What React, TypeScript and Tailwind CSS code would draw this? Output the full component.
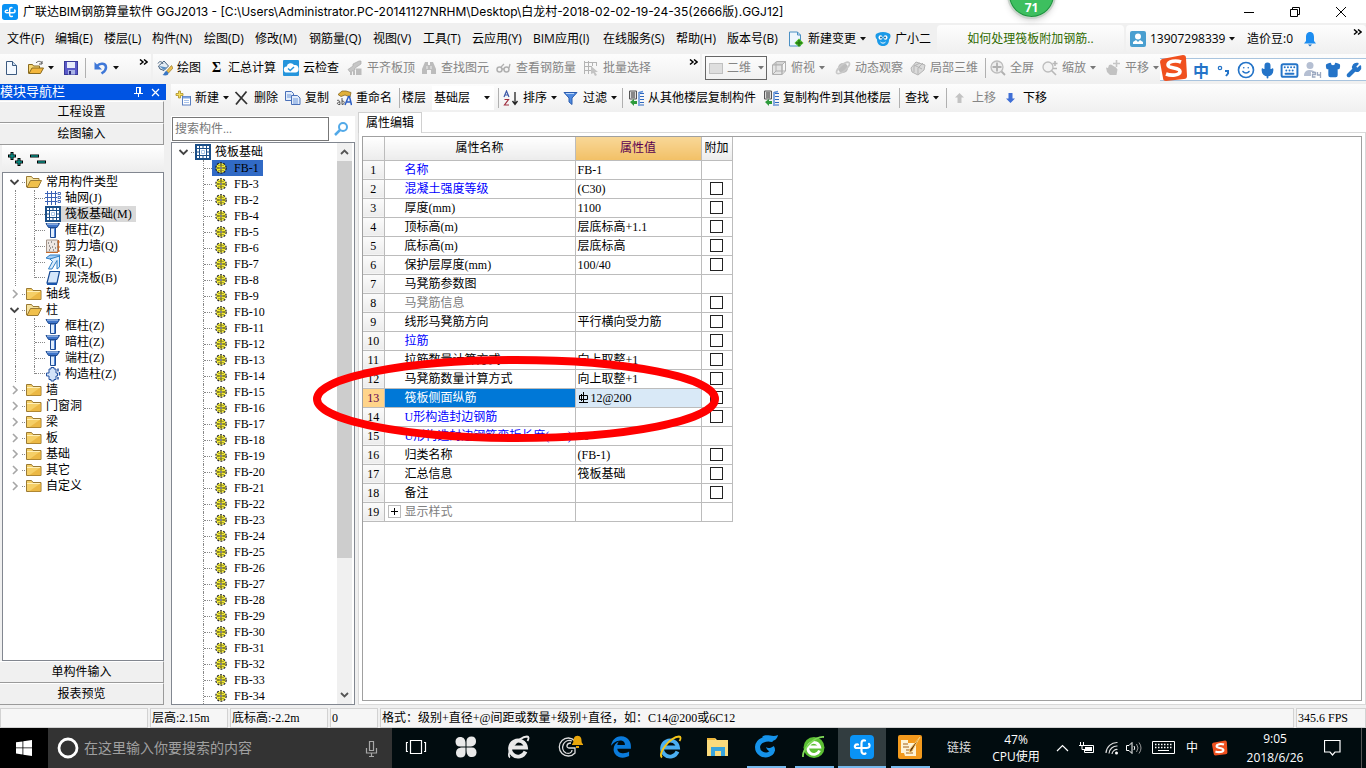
import { ReactNode, useState } from 'react';
import { Keyboard, Mic, Shirt, Smile, Wrench } from 'lucide-react';
import { FaEdgeLegacy } from 'react-icons/fa';

const uiFont = "font-['Open_Sans','Noto_Sans_CJK_SC',sans-serif]";
const songFont = "font-['Liberation_Serif','Noto_Sans_CJK_SC',serif]";
const band = 'bg-gradient-to-b from-[#fdfdfd] to-[#f0f0f0]';

/* ---------- icons ---------- */

function Svg({ children, w = 16, h = 16, box }: { children: ReactNode; w?: number; h?: number; box?: string }) {
  return (
    <svg width={w} height={h} viewBox={box ?? `0 0 ${w} ${h}`} fill="none" className="shrink-0" aria-hidden="true">
      {children}
    </svg>
  );
}

const Caret = ({ color = '#111' }: { color?: string }) => (
  <Svg w={6} h={4}>
    <path d="M0 0h6L3 3.5z" fill={color} />
  </Svg>
);

const More = () => (
  <Svg w={9} h={7}>
    <path d="M1 .5l3 2.5-3 2.5M5 .5l3 2.5-3 2.5" stroke="#000" strokeWidth="1.5" />
  </Svg>
);

const AppIcon = ({ size = 16 }: { size?: number }) => (
  <Svg w={size} h={size} box="0 0 24 24">
    <rect width="24" height="24" rx="4" fill="#0a93f5" />
    <path d="M15 5.500c-2.500-.5-3.500.5-3.500 3V16c0 2.500 2 3.500 4 2.500M8 9.500c-3.500-.5-4.500 3.500-1 3.500h9.500c3 0 4-2 2.500-4" stroke="#fff" strokeWidth="2.200" strokeLinecap="round" />
  </Svg>
);

const NewDocIcon = () => (
  <Svg>
    <path d="M2.500 1.500h6l4 4v9h-10z" fill="#f4f9ff" stroke="#3c5a80" />
    <path d="M8.500 1.500v4h4" fill="#c9dcf0" stroke="#3c5a80" />
  </Svg>
);

const OpenIcon = () => (
  <Svg>
    <path d="M.5 13.500v-9h4l1 1.500h6v2.500" fill="#f7d774" stroke="#8a6a1e" />
    <path d="M1 13.500L4 8h11.500l-3 5.500z" fill="#f3b63c" stroke="#8a6a1e" />
    <path d="M8 3c2-2.500 5-2 6 .5m0-2.500v3h-3" stroke="#555" />
  </Svg>
);

const SaveIcon = () => (
  <Svg>
    <rect x="1.500" y="1.500" width="13" height="13" fill="#5a5ac8" stroke="#3a3a98" />
    <rect x="4" y="2" width="8" height="6" fill="#e8ecfa" />
    <rect x="5" y="10" width="7" height="4.500" fill="#aab4e6" />
    <rect x="6" y="11" width="2" height="3.500" fill="#2c2c80" />
  </Svg>
);

const UndoIcon = () => (
  <Svg>
    <path d="M4 6C7 2.500 13 3 13 7.500c0 3.500-2.500 4.500-4.500 6" stroke="#3f78d8" strokeWidth="2.500" />
    <path d="M1.500 2v7.500h7.500z" fill="#3f78d8" />
  </Svg>
);

const PaintIcon = () => (
  <Svg>
    <path d="M1.500 6L7 1l4.500 5L7 10.500 3 9z" fill="#e4edf5" stroke="#46607c" />
    <path d="M1 3.500C2 1 5 1 6 4" stroke="#46607c" />
    <path d="M2 6l8 1.500L7 10z" fill="#5a8fc4" />
    <path d="M14.500 5.500L9.500 11l2 2L16 8z" fill="#eec04c" stroke="#8c6a1a" strokeWidth=".6" />
    <path d="M9.500 11c-2 0-2 3-4 4 3 1 6 .5 6-2z" fill="#3976c4" />
  </Svg>
);

const CloudCheckIcon = () => (
  <Svg>
    <rect width="16" height="16" rx="1" fill="#2595dc" />
    <path d="M4 12.500a3 3 0 01-.3-6A4 4 0 0111 5a3.700 3.700 0 011.500 7.500z" fill="#fff" />
    <path d="M5 8.500l2.200 2L11 7" stroke="#2595dc" strokeWidth="1.500" />
  </Svg>
);

const AlignTopIcon = () => (
  <Svg>
    <path d="M1 9.500L6 6V4l6-3h2v3L8 8v2l-5 2z" fill="#c6c6c6" stroke="#aaa" strokeWidth=".7" />
    <path d="M3 11.500h2V15H3zM6 10.500h2V15H6zM9 8.500h5.500V15H9z" fill="#bcbcbc" />
  </Svg>
);

const BinocularsIcon = () => (
  <Svg>
    <path d="M4 2h3v3h2V2h3l3 7v5h-5v-4H6v4H1V9z" fill="#bcbcbc" />
    <path d="M6 6v3M10 6v3" stroke="#eee" />
  </Svg>
);

const GlassesIcon = () => (
  <Svg>
    <circle cx="3.500" cy="9.500" r="2.500" stroke="#b0b0b0" strokeWidth="1.500" />
    <circle cx="10.500" cy="9.500" r="2.500" stroke="#b0b0b0" strokeWidth="1.500" />
    <path d="M6 9h2M5 7l3-3M13 8l1-4" stroke="#b0b0b0" strokeWidth="1.300" />
  </Svg>
);

const BatchIcon = () => (
  <Svg>
    <path d="M1.500 1v13M5.500 1v13M1 2.500h13M1 6.500h8M1 10.500h7M9.500 2v4M13.500 2v4" stroke="#b4b4b4" />
    <path d="M8 6l7 6h-3l2 3-2 1-1.500-3L8 14z" fill="#c4c4c4" />
  </Svg>
);

const PlaneIcon = () => (
  <Svg>
    <rect x="1.500" y="3.500" width="13" height="10" fill="#dedede" stroke="#c0c0c0" />
  </Svg>
);

const CubeIcon = () => (
  <Svg>
    <path d="M1.500 5l4-3.500h9L11 5z" fill="#d6d6d6" stroke="#b0b0b0" />
    <path d="M1.500 5H11v9.500H1.500z" fill="#e4e4e4" stroke="#b0b0b0" />
    <path d="M11 5l3.500-3.500V11L11 14.500zM5 2v9l-3 3m3-3h9" stroke="#b0b0b0" />
  </Svg>
);

const OrbitIcon = () => (
  <Svg>
    <circle cx="8" cy="8" r="5" fill="#bdbdbd" />
    <ellipse cx="8" cy="8" rx="8" ry="3" transform="rotate(-40 8 8)" stroke="#c9c9c9" strokeWidth="1.600" />
  </Svg>
);

const Local3dIcon = () => (
  <Svg>
    <path d="M1 8l5-6 9 3-1 5-6 5-6-3z" fill="#dadada" stroke="#b3b3b3" />
    <path d="M4 5l8 4M8 14V8l5-5M4 12V6l6-3" stroke="#b3b3b3" />
  </Svg>
);

const FullIcon = () => (
  <Svg>
    <circle cx="7" cy="7" r="6" stroke="#bdbdbd" strokeWidth="1.300" fill="#eee" />
    <path d="M7 2.500v9M2.500 7h9M11.500 11.500L15 15" stroke="#b0b0b0" strokeWidth="1.800" />
  </Svg>
);

const ZoomIcon = () => (
  <Svg>
    <circle cx="6" cy="7" r="5" stroke="#bdbdbd" strokeWidth="1.300" fill="#f3f3f3" />
    <path d="M9.500 10.500L14 15M13 1v5M10.500 3.500h5M11 8.500h4" stroke="#b8b8b8" strokeWidth="1.600" />
  </Svg>
);

const PanIcon = () => (
  <Svg>
    <path d="M1 7.500l2 .5 1-3 2-.5 5 3 1.500 2-1 5.500H5L2 12z" fill="#c2c2c2" />
    <path d="M11.500 0v7M8 3.500h7" stroke="#c6c6c6" strokeWidth="1.600" />
  </Svg>
);

const AddIcon = () => (
  <Svg>
    <rect x="7.500" y="6.500" width="8" height="8.500" fill="#fff" stroke="#5a7fc0" />
    <path d="M8 7.500h7" stroke="#7ba3e0" strokeWidth="2" />
    <path d="M9 10.500h5M9 12.500h5" stroke="#a9c3ea" />
    <path d="M3.500 1h2v2.500H8v2H5.500V8h-2V5.500H1v-2h2.500z" fill="#f8df5c" stroke="#a08318" strokeWidth=".7" />
  </Svg>
);

const DeleteIcon = () => (
  <Svg>
    <path d="M1.500 2L13 14M12.500 1.500L2 14.500" stroke="#333" strokeWidth="1.800" />
  </Svg>
);

const CopyIcon = () => (
  <Svg>
    <path d="M.5 1.500h6l2 2v7h-8z" fill="#e3edfb" stroke="#4a70b8" />
    <path d="M6.500 5.500h6l2.500 2.500v6.500H6.500z" fill="#e3edfb" stroke="#4a70b8" />
    <path d="M2 5h4M2 7h4M8 9h5M8 11h5M8 13h5" stroke="#6f98da" />
  </Svg>
);

const RenameIcon = () => (
  <Svg>
    <path d="M2 4.500L6 1h4l5 1.500-1 4.500-5-2-4 1.500z" fill="#e0b03a" stroke="#7a5a14" strokeWidth=".7" />
    <path d="M9 15l3.500-8.500h1L15.500 15M10.500 12h4" stroke="#2d5fc4" strokeWidth="1.500" />
    <path d="M1 10.500c2.500-1 3 1 3 4-3 .5-4-2.500 0-2.500M6 8v6.500c3 0 3-4 0-3.500" stroke="#444" strokeWidth=".9" />
  </Svg>
);

const SortIcon = () => (
  <Svg>
    <path d="M1 7l2.500-6L6 7M2 5h3" stroke="#3d59a8" strokeWidth="1.200" />
    <path d="M1.500 9.500h4L1.500 15h4.500" stroke="#a03040" strokeWidth="1.200" />
    <path d="M12 2v12M9.500 11l2.500 3.500 2.500-3.500" stroke="#222" strokeWidth="1.300" />
  </Svg>
);

const FilterIcon = () => (
  <Svg>
    <path d="M1 2.500h13L9 8v6.500L6 12V8z" fill="#4f8ae0" stroke="#2b5cae" />
    <path d="M3 3.500h8" stroke="#b8d4f8" />
  </Svg>
);

const CopyFloorIcon = () => (
  <Svg>
    <path d="M1.500 1h7v8h-7z" fill="#ddd" stroke="#555" />
    <path d="M3 3h4M3 5h4M3 7h4" stroke="#333" />
    <path d="M12 3.500h4M12 6.500h4M12 9.500h4M12 12.500h4M12 15h4" stroke="#2e68c0" />
    <path d="M11 2v14M11 2.500l4-1" stroke="#5c8fd8" strokeWidth="1.500" />
    <path d="M2 12l4-3v2h3v3H6v2z" fill="#2e9b3c" />
  </Svg>
);

const ArrowIcon = ({ up }: { up?: boolean }) => (
  <Svg w={14} h={10}>
    {up ? (
      <path d="M5.500 0L10 4.500H7.500V10h-4V4.500H1z" fill="#c3c3c3" />
    ) : (
      <path d="M5.500 10L10 5.500H7.500V0h-4v5.500H1z" fill="#3f6fd6" />
    )}
  </Svg>
);

const ChangeIcon = () => (
  <Svg>
    <path d="M1.500 1h8l3 3v11h-11z" fill="#eef6fd" stroke="#4b90c4" />
    <path d="M9.500 1v3h3" stroke="#4b90c4" />
    <path d="M11 7.500l4.500 4.500-4.500 4-4.500-4z" fill="#46b525" />
    <path d="M11 9v6M8 12h6" stroke="#267a10" strokeWidth="1.500" />
  </Svg>
);

const MascotIcon = () => (
  <Svg>
    <path d="M1 3l2-1c3-1.500 7-1.500 10 0l2 1c1 2 .5 4-1 5.500 0 4-2 6.500-6 6.500s-6-2.500-6-6.500C.5 7 0 5 1 3z" fill="#1b9ae8" />
    <ellipse cx="5.500" cy="6.500" rx="2" ry="2.200" fill="#fff" />
    <ellipse cx="10.500" cy="6.500" rx="2" ry="2.200" fill="#fff" />
    <circle cx="6" cy="6.500" r="1" fill="#12639c" />
    <circle cx="10" cy="6.500" r="1" fill="#12639c" />
    <path d="M5.500 11c1.500 1.500 3.500 1.500 5 0" stroke="#fff" />
  </Svg>
);

const UserIcon = () => (
  <Svg>
    <rect width="16" height="16" rx="2" fill="#4a9fd0" />
    <circle cx="8" cy="5.500" r="3" fill="#fff" />
    <path d="M3 13v-2l3-2 2 2 2-2 3 2v2z" fill="#fff" />
  </Svg>
);

const BellIcon = () => (
  <Svg w={14}>
    <path d="M7 1c3 0 4 2.500 4 5v4l2 2.500H1L3 10V6c0-2.500 1-5 4-5z" fill="#1d8df0" />
    <path d="M5 13.500h4L7 15.500z" fill="#1d6fc0" />
  </Svg>
);

const SogouIcon = ({ size }: { size: number }) => (
  <Svg w={size} h={size} box="0 0 28 28">
    <path d="M2 5L23 1q3 0 3 3l1 18q0 3-3 3L6 27q-3 0-3-3L0 8q0-2 2-3z" fill="#f0501e" />
    <path d="M21 8C16 6 8 7 8 11c0 4 12 2 12 6.500C20 21.500 11 22 6 20" stroke="#fff" strokeWidth="3.600" />
  </Svg>
);

const FolderIcon = ({ open }: { open?: boolean }) => (
  <Svg>
    {open ? (
      <>
        <path d="M.5 13V2.500h5l1.500 2h6V7" fill="#f6e3a0" stroke="#9a7a34" />
        <path d="M1 13.500L4.500 6.500h11L12 13.500z" fill="#f0c04c" stroke="#9a7a34" />
      </>
    ) : (
      <>
        <path d="M.5 13.500V2.500h5l1.500 2h8v9z" fill="#f5cf67" stroke="#9a7a34" />
        <path d="M1 5.500h13" stroke="#fff0b8" />
        <path d="M15 5v8.500H3z" fill="#e4a92e" opacity=".6" />
      </>
    )}
  </Svg>
);

const GridIcon = () => (
  <Svg>
    <path d="M2.500 1v14M6.500 1v14M10.500 1v14M0 3.500h12M0 7.500h12M0 11.500h12" stroke="#3a62b5" />
    <path d="M13 2.500h2.500v2H13zM13 6.500h2.500v2H13zM13 10.500h2.500v2H13z" stroke="#3a62b5" strokeWidth=".9" />
  </Svg>
);

const RaftIcon = () => (
  <Svg>
    <path d="M1 1h14v14H1z" fill="#fff" stroke="#1b4f88" strokeWidth="2" />
    <path d="M4.500 2v12M11.500 2v12M2 4.500h12M2 11.500h12" stroke="#1b4f88" />
    <path d="M8 2v2M8 12v2M2 8h2M12 8h2" stroke="#1b4f88" />
    <path d="M6.500 6.500h3v3h-3z" fill="#fff" stroke="#a9c6e6" />
  </Svg>
);

const ColumnIcon = () => (
  <Svg>
    <path d="M1 1.500h13.500L12 5.500H3.500z" fill="#3e74c9" stroke="#1c4a91" />
    <path d="M2 2h11" stroke="#c6dcfa" />
    <path d="M5.500 6h5v9.500h-5z" fill="#e2eefc" stroke="#1c4a91" />
    <path d="M9.500 6v9" stroke="#4b82d8" />
  </Svg>
);

const WallIcon = () => (
  <Svg>
    <path d="M1.500 2h11v12h-11z" fill="#eee7e2" stroke="#a39488" />
    <path d="M3 5h1M6 4h1M9 6h1M4 8h1M7 9h1M10 10h1M4 12h1M8 12h1M5 10h1" stroke="#444" />
    <path d="M13.500 2v12M12 4h3M12 9h3M12 13h3M1 14.500h12" stroke="#c46a2c" />
  </Svg>
);

const BeamIcon = () => (
  <Svg>
    <path d="M1 4l4-3h10l-3 4H5z" fill="#a5cdf3" stroke="#2f7fc5" />
    <path d="M5 5l2.500 2.500L3.500 15H7l5-8.500V15l2.500-2V2z" fill="#d9ebfb" stroke="#2f7fc5" />
  </Svg>
);

const SlabIcon = () => (
  <Svg>
    <path d="M5 1.500h9.500L12 13H2z" fill="#d5e6fb" stroke="#174a94" strokeWidth="1.200" />
    <path d="M2 13h10v2H2z" fill="#1b56ae" />
  </Svg>
);

const TieColumnIcon = () => (
  <Svg>
    <path d="M4 3h2V1.500h3V3h2v4h1.500v3H11v3.500H9V15H6v-1.500H4V10H1.500V7H4z" fill="#d2e2f8" stroke="#2452a0" />
    <path d="M13 2.500v3M14.500 6v3.500M13 11v2.500" stroke="#2452a0" strokeWidth="1.500" />
  </Svg>
);

const GearIcon = () => (
  <Svg w={12} h={12}>
    <circle cx="6" cy="6" r="4.800" fill="#f6ee2a" />
    <circle cx="6" cy="6" r="5.200" stroke="#222" strokeWidth="1.200" strokeDasharray="2 1.267" />
    <path d="M6 2v2M6 8v2M2 6h2M8 6h2" stroke="#222" />
    <path d="M3.500 3.500h1M7.500 3.500h1M3.500 8.500h1M7.500 8.500h1" stroke="#555" />
    <circle cx="6" cy="6" r="1.200" fill="#fff" stroke="#222" strokeWidth=".8" />
  </Svg>
);

const Chevron = ({ open }: { open?: boolean }) => (
  <Svg w={12} h={12}>
    {open ? (
      <path d="M1.500 4l4 4 4-4" stroke="#444" strokeWidth="1.800" />
    ) : (
      <path d="M4 2l4 4-4 4" stroke="#a6a6a6" strokeWidth="1.600" />
    )}
  </Svg>
);

/* ---------- toolbars ---------- */

type Tool = { w: string; icon?: ReactNode; label?: string; caret?: boolean; off?: boolean };

function ToolButton({ w, icon, label, caret, off }: Tool) {
  return (
    <button
      aria-label={label ?? '工具'}
      className={`${w} flex h-full shrink-0 items-center gap-1 whitespace-nowrap text-xs ${off ? 'text-[#858585]' : 'text-black'}`}
    >
      {icon}
      {label && <span>{label}</span>}
      {caret && <Caret color={off ? '#777' : '#111'} />}
    </button>
  );
}

const Sep = ({ w }: { w: string }) => (
  <span className={`${w} flex h-full shrink-0 items-center`}>
    <span className="h-5 w-px bg-[#b0b0b0]" />
  </span>
);

const menus = [
  { w: 'w-12', label: '文件(F)' },
  { w: 'w-[49px]', label: '编辑(E)' },
  { w: 'w-12', label: '楼层(L)' },
  { w: 'w-[52px]', label: '构件(N)' },
  { w: 'w-[51px]', label: '绘图(D)' },
  { w: 'w-[54px]', label: '修改(M)' },
  { w: 'w-16', label: '钢筋量(Q)' },
  { w: 'w-[50px]', label: '视图(V)' },
  { w: 'w-[49px]', label: '工具(T)' },
  { w: 'w-[61px]', label: '云应用(Y)' },
  { w: 'w-[70px]', label: 'BIM应用(I)' },
  { w: 'w-[73px]', label: '在线服务(S)' },
  { w: 'w-[51px]', label: '帮助(H)' },
  { w: 'w-[60px]', label: '版本号(B)' },
];

const drawTools: Tool[] = [
  { w: 'w-[52px]', icon: <PaintIcon />, label: '绘图' },
  { w: 'w-[74px]', icon: <b className="w-[15px] text-center font-['Liberation_Serif',serif] text-sm leading-4">Σ</b>, label: '汇总计算' },
  { w: 'w-16', icon: <CloudCheckIcon />, label: '云检查' },
  { w: 'w-[74px]', icon: <AlignTopIcon />, label: '平齐板顶', off: true },
  { w: 'w-[75px]', icon: <BinocularsIcon />, label: '查找图元', off: true },
  { w: 'w-[87px]', icon: <GlassesIcon />, label: '查看钢筋量', off: true },
  { w: 'w-[110px]', icon: <BatchIcon />, label: '批量选择', off: true },
];

const viewTools: Tool[] = [
  { w: 'w-16', icon: <CubeIcon />, label: '俯视', caret: true, off: true },
  { w: 'w-[75px]', icon: <OrbitIcon />, label: '动态观察', off: true },
  { w: 'w-[75px]', icon: <Local3dIcon />, label: '局部三维', off: true },
];

const zoomTools: Tool[] = [
  { w: 'w-[52px]', icon: <FullIcon />, label: '全屏', off: true },
  { w: 'w-[63px]', icon: <ZoomIcon />, label: '缩放', caret: true, off: true },
  { w: 'w-[63px]', icon: <PanIcon />, label: '平移', caret: true, off: true },
];

function TitleBar() {
  return (
    <header className="flex h-[23px] items-center bg-white pl-[2px]">
      <AppIcon />
      <h1 className="ml-[5px] flex-1 whitespace-nowrap font-['Inter','Noto_Sans_CJK_SC',sans-serif] text-xs">
        广联达BIM钢筋算量软件 GGJ2013 - [C:\Users\Administrator.PC-20141127NRHM\Desktop\白龙村-2018-02-02-19-24-35(2666版).GGJ12]
      </h1>
      <div className="flex gap-9 pr-5">
        <button aria-label="最小化">
          <Svg w={10} h={10}><path d="M0 5.500h10" stroke="#000" /></Svg>
        </button>
        <button aria-label="还原">
          <Svg w={10} h={10}><path d="M.5 2.500h7v7h-7zM2.500 2.500v-2h7v7h-2" stroke="#000" /></Svg>
        </button>
        <button aria-label="关闭">
          <Svg w={10} h={10}><path d="M0 0l10 10M10 0L0 10" stroke="#000" /></Svg>
        </button>
      </div>
    </header>
  );
}

function MenuBar() {
  return (
    <nav className="flex h-[31px] items-center overflow-hidden pl-[7px] text-xs">
      {menus.map((m) => (
        <button key={m.label} className={`${m.w} shrink-0 whitespace-nowrap text-left`}>
          {m.label}
        </button>
      ))}
      <ToolButton w="w-[87px] ml-px" icon={<ChangeIcon />} label="新建变更" caret />
      <ToolButton w="w-[62px]" icon={<MascotIcon />} label="广小二" />
      <a href="#help" className={`${band} flex h-7 w-[187px] shrink-0 items-center justify-center rounded-sm text-[#2f6a00]`}>
        如何处理筏板附加钢筋..
      </a>
      <div className={`${band} ml-[2px] flex h-7 min-w-0 flex-1 items-center rounded-sm pl-1`}>
        <ToolButton w="w-[117px]" icon={<UserIcon />} label="13907298339" caret />
        <span className="w-[56px] shrink-0 whitespace-nowrap">造价豆:0</span>
        <button aria-label="消息"><BellIcon /></button>
        <span className="mb-3 ml-auto pr-1"><More /></span>
      </div>
    </nav>
  );
}

function MainToolbar() {
  return (
    <div className="relative flex h-[28px] gap-[2px] overflow-hidden">
      <div className={`${band} flex w-[151px] shrink-0 items-center pl-1`}>
        <ToolButton w="w-6" icon={<NewDocIcon />} />
        <ToolButton w="w-[35px]" icon={<OpenIcon />} caret />
        <ToolButton w="w-[22px]" icon={<SaveIcon />} />
        <Sep w="w-2" />
        <ToolButton w="w-[46px]" icon={<UndoIcon />} caret />
        <span className="mb-3"><More /></span>
      </div>
      <div className={`${band} flex w-[547px] shrink-0 items-center pl-1`}>
        {drawTools.map((t) => <ToolButton key={t.label} {...t} />)}
        <span className="mb-3 -ml-1"><More /></span>
      </div>
      <div className={`${band} flex flex-1 items-center pl-[3px]`}>
        <button className="mr-1 flex h-6 w-[62px] shrink-0 items-center gap-[3px] border border-[#666] pl-[2px] text-xs text-[#858585]">
          <PlaneIcon />
          <span className="mr-1 whitespace-nowrap">二维</span>
          <Caret color="#777" />
        </button>
        {viewTools.map((t) => <ToolButton key={t.label} {...t} />)}
        <Sep w="w-[5px]" />
        {zoomTools.map((t) => <ToolButton key={t.label} {...t} />)}
      </div>
      {/* input method bar floats over the toolbar */}
      <div className="absolute right-0 top-0 flex h-7 w-[206px] items-center">
        <span className="absolute inset-x-0 bottom-[1px] top-1 border-y border-[#a9c4de] bg-white" />
        <div className="relative flex items-center text-[#2474c8]">
          <SogouIcon size={28} />
          <b className="ml-[5px] mt-1 w-6 font-['Noto_Sans_CJK_SC',sans-serif] text-base leading-5">中</b>
          <span className="mt-1 w-5">
            <Svg w={14} h={14}>
              <circle cx="3" cy="5" r="1.700" stroke="#2474c8" strokeWidth="1.200" />
              <path d="M8 8h3v2.500L9 13" stroke="#2474c8" strokeWidth="2" />
            </Svg>
          </span>
          <Smile size={18} strokeWidth={2.200} className="mt-1" />
          <Mic size={17} strokeWidth={2.500} className="ml-1 mt-1" fill="currentColor" />
          <Keyboard size={19} strokeWidth={2.500} className="ml-1 mt-1" />
          <span className="ml-1 mt-1 w-[22px]">
            <Svg w={19} h={18}>
              <circle cx="7" cy="4.500" r="3.500" fill="#b5bfd2" />
              <path d="M1 15c0-5 3-6 6-6s4 1 5 2H8v4z" fill="#b5bfd2" />
              <path d="M9 11.500h3.500v2H9.500v2.500h3M14.500 11v3H18M17.500 11v6" stroke="#9ba8c0" strokeWidth="1.300" />
            </Svg>
          </span>
          <Shirt size={16} fill="currentColor" className="mt-1" />
          <Wrench size={16} fill="currentColor" className="ml-[5px] mt-1" />
        </div>
      </div>
    </div>
  );
}

function ComponentToolbar() {
  return (
    <div className={`${band} flex h-[28px] items-center overflow-hidden pl-1 text-xs`}>
      <ToolButton w="w-[59px]" icon={<AddIcon />} label="新建" caret />
      <ToolButton w="w-[51px]" icon={<DeleteIcon />} label="删除" />
      <ToolButton w="w-[51px]" icon={<CopyIcon />} label="复制" />
      <ToolButton w="w-[63px]" icon={<RenameIcon />} label="重命名" />
      <Sep w="w-[3px]" />
      <label htmlFor="floor" className="w-[30px] shrink-0 whitespace-nowrap">楼层</label>
      <div className="flex h-6 w-[62px] shrink-0 items-center bg-white pr-1">
        <select id="floor" className="min-w-0 flex-1 appearance-none pl-[2px] outline-none">
          <option>基础层</option>
        </select>
        <Caret />
      </div>
      <Sep w="w-[5px] ml-1" />
      <ToolButton w="w-[60px]" icon={<SortIcon />} label="排序" caret />
      <ToolButton w="w-[59px]" icon={<FilterIcon />} label="过滤" caret />
      <Sep w="w-[6px]" />
      <ToolButton w="w-[135px]" icon={<CopyFloorIcon />} label="从其他楼层复制构件" />
      <ToolButton w="w-[136px]" icon={<CopyFloorIcon />} label="复制构件到其他楼层" />
      <Sep w="w-[6px]" />
      <ToolButton w="w-[41px]" label="查找" caret />
      <Sep w="w-2" />
      <ToolButton w="w-[51px]" icon={<ArrowIcon up />} label="上移" off />
      <ToolButton w="w-[51px]" icon={<ArrowIcon />} label="下移" />
    </div>
  );
}

/* ---------- left navigation ---------- */

type Node = { label: string; icon?: ReactNode; children?: Node[] };

const navTree: Node[] = [
  {
    label: '常用构件类型',
    children: [
      { label: '轴网(J)', icon: <GridIcon /> },
      { label: '筏板基础(M)', icon: <RaftIcon /> },
      { label: '框柱(Z)', icon: <ColumnIcon /> },
      { label: '剪力墙(Q)', icon: <WallIcon /> },
      { label: '梁(L)', icon: <BeamIcon /> },
      { label: '现浇板(B)', icon: <SlabIcon /> },
    ],
  },
  { label: '轴线' },
  {
    label: '柱',
    children: [
      { label: '框柱(Z)', icon: <ColumnIcon /> },
      { label: '暗柱(Z)', icon: <ColumnIcon /> },
      { label: '端柱(Z)', icon: <ColumnIcon /> },
      { label: '构造柱(Z)', icon: <TieColumnIcon /> },
    ],
  },
  { label: '墙' },
  { label: '门窗洞' },
  { label: '梁' },
  { label: '板' },
  { label: '基础' },
  { label: '其它' },
  { label: '自定义' },
];

function Branch({ last, w = 'w-[11px]' }: { last?: boolean; w?: string }) {
  return (
    <span className={`flex shrink-0 self-start border-l border-dotted border-[#888] ${w} ${last ? 'h-2 items-end' : 'h-4 items-center'}`}>
      <span className="w-full border-t border-dotted border-[#888]" />
    </span>
  );
}

const barButton = 'mr-[2px] h-[22px] border-b border-r border-t border-b-[#9a9a9a] border-r-[#9a9a9a] border-t-white bg-[#f0f0f0] text-center leading-5';

function ModuleNav({ active, onPick }: { active: string; onPick: (label: string) => void }) {
  return (
    <aside className={`${songFont} flex w-[166px] shrink-0 flex-col text-xs`}>
      <div className="flex h-4 items-center bg-[#0054e3] text-[13px] leading-4 text-white">
        <h2 className="flex-1 whitespace-nowrap">模块导航栏</h2>
        <button aria-label="固定" className="mr-2">
          <Svg w={9} h={10}><path d="M2.500 0v6M6.500 0v6M2 .5h5M0 6.500h9M4.500 6v4M5.500 0v6" stroke="#fff" /></Svg>
        </button>
        <button aria-label="关闭面板" className="mr-[6px]">
          <Svg w={9} h={9}><path d="M1 1l7 7M8 1L1 8" stroke="#fff" strokeWidth="1.200" /></Svg>
        </button>
      </div>
      <button className={`${barButton} mt-px`}>工程设置</button>
      <button className={barButton}>绘图输入</button>
      <div className="mx-[2px] flex h-[27px] items-center gap-[6px] bg-gradient-to-b from-white to-[#ededed] pl-[5px]">
        <button aria-label="全部展开">
          <Svg w={17} h={16}>
            <path d="M5 1v8M1 5h8M12 7v8M8 11h8" stroke="#000" strokeWidth="3" />
            <path d="M5 2v6M2 5h6M12 8v6M9 11h6" stroke="#0a8f86" strokeWidth="1.400" />
          </Svg>
        </button>
        <button aria-label="全部折叠">
          <Svg w={17} h={16}>
            <path d="M0 5h9M7 11h9" stroke="#000" strokeWidth="3" />
            <path d="M1 5h7M8 11h7" stroke="#0a8f86" strokeWidth="1.400" />
          </Svg>
        </button>
      </div>
      <ul className="ml-[2px] mr-[2px] flex-1 overflow-hidden border border-[#828790] bg-white pt-px leading-4">
        {navTree.map((n, i) => (
          <li key={n.label}>
            <button className="flex h-4 items-center pl-[6px]">
              <Chevron open={!!n.children} />
              <span className="mx-px w-[3px] border-t border-dotted border-[#888]" />
              <FolderIcon open={!!n.children} />
              <span className="ml-1 whitespace-nowrap">{n.label}</span>
            </button>
            {n.children && (
              <ul>
                {n.children.map((c, k) => (
                  <li key={c.label + k} className="flex h-4 pl-3">
                    <span className="w-[19px] border-l border-dotted border-[#888]" />
                    <Branch last={k === n.children!.length - 1} />
                    <button
                      onClick={() => onPick(i + c.label)}
                      className={`flex items-center gap-1 whitespace-nowrap pr-1 ${active === i + c.label ? 'bg-[#d9d9d9]' : ''}`}
                    >
                      {c.icon}
                      <span>{c.label}</span>
                    </button>
                  </li>
                ))}
              </ul>
            )}
          </li>
        ))}
      </ul>
      <button className={barButton}>单构件输入</button>
      <button className={barButton}>报表预览</button>
    </aside>
  );
}

/* ---------- component list ---------- */

const slabs = [1, 3, 2, ...Array.from({ length: 31 }, (_, i) => i + 4)].map((n) => `FB-${n}`);

function ComponentList({ selected, onSelect }: { selected: string; onSelect: (name: string) => void }) {
  return (
    <section className={`${songFont} flex w-[184px] shrink-0 flex-col pt-1 text-xs`}>
      <div className="flex h-[26px] items-center bg-white">
        <input
          aria-label="搜索构件"
          placeholder="搜索构件..."
          className="ml-px h-6 w-[157px] border border-[#777] bg-white px-[2px] outline-none placeholder:text-[#777]"
        />
        <button aria-label="搜索" className="ml-[5px]">
          <Svg w={15}>
            <circle cx="9" cy="6" r="4" stroke="#52a9e8" strokeWidth="2" />
            <path d="M6 9l-5 5" stroke="#52a9e8" strokeWidth="2.500" />
          </Svg>
        </button>
      </div>
      <div className="flex min-h-0 flex-1 border border-[#828790] bg-white">
        <ul className="flex-1 overflow-hidden pt-px leading-4">
          <li className="flex h-4 items-center pl-[6px]">
            <Chevron open />
            <span className="mx-px w-[3px] border-t border-dotted border-[#888]" />
            <RaftIcon />
            <span className="ml-1">筏板基础</span>
          </li>
          {slabs.map((s) => (
            <li key={s} className="flex h-4 pl-[31px]">
              <Branch w="w-[9px]" />
              <button
                onClick={() => onSelect(s)}
                className={`flex items-center gap-[7px] pl-[3px] pr-1 ${s === selected ? 'bg-[#316ac5]' : ''}`}
              >
                <GearIcon />
                <span>{s}</span>
              </button>
            </li>
          ))}
        </ul>
        <div className="mr-[2px] flex w-[15px] flex-col bg-[#f0f0f0]">
          <button aria-label="向上滚动" className="flex h-[18px] items-center justify-center">
            <Svg w={9} h={6}><path d="M1 5l3.500-3.500L8 5" stroke="#555" strokeWidth="1.800" /></Svg>
          </button>
          <div className="h-[397px] bg-[#cdcdcd]" />
          <button aria-label="向下滚动" className="mt-auto flex h-[18px] items-center justify-center">
            <Svg w={9} h={6}><path d="M1 1l3.500 3.500L8 1" stroke="#555" strokeWidth="1.800" /></Svg>
          </button>
        </div>
      </div>
    </section>
  );
}

/* ---------- property editor ---------- */

type Prop = { name: string; value?: string; tone?: 'blue' | 'gray'; extra?: boolean };

const props: Prop[] = [
  { name: '名称', value: 'FB-1', tone: 'blue' },
  { name: '混凝土强度等级', value: '(C30)', tone: 'blue', extra: true },
  { name: '厚度(mm)', value: '1100', extra: true },
  { name: '顶标高(m)', value: '层底标高+1.1', extra: true },
  { name: '底标高(m)', value: '层底标高', extra: true },
  { name: '保护层厚度(mm)', value: '100/40', extra: true },
  { name: '马凳筋参数图' },
  { name: '马凳筋信息', tone: 'gray', extra: true },
  { name: '线形马凳筋方向', value: '平行横向受力筋', extra: true },
  { name: '拉筋', tone: 'blue', extra: true },
  { name: '拉筋数量计算方式', value: '向上取整+1', extra: true },
  { name: '马凳筋数量计算方式', value: '向上取整+1', extra: true },
  { name: '筏板侧面纵筋', value: '12@200', tone: 'blue', extra: true },
  { name: 'U形构造封边钢筋', tone: 'blue', extra: true },
  { name: 'U形构造封边钢筋弯折长度(mm)', value: '30', tone: 'blue' },
  { name: '归类名称', value: '(FB-1)', extra: true },
  { name: '汇总信息', value: '筏板基础', extra: true },
  { name: '备注', extra: true },
  { name: '显示样式', tone: 'gray' },
];

const tones = { blue: 'text-[#0000ff]', gray: 'text-[#808080]' };
const headCell = 'border-b border-r border-[#bcbcbc] bg-gradient-to-b from-white to-[#ececec] font-normal';

const RebarSign = () => (
  <Svg w={11} h={11}>
    <path d="M5.500 0v10M1.500 3.500h8v4h-8zM1 10.500h9M3.500 2v7" stroke="#000" />
  </Svg>
);

function PropertyTable() {
  return (
    <table className="w-[369px] table-fixed border-collapse leading-4">
      <colgroup>
        <col className="w-[21px]" />
        <col className="w-[191px]" />
        <col className="w-[126px]" />
        <col className="w-[31px]" />
      </colgroup>
      <thead>
        <tr className="h-[23px]">
          <th className={headCell} aria-label="序号" />
          <th className={headCell}>属性名称</th>
          <th className="border-b border-r border-[#bcbcbc] bg-gradient-to-b from-[#f8d797] to-[#f2c066] font-normal text-[#5a0050]">属性值</th>
          <th className={headCell}>附加</th>
        </tr>
      </thead>
      <tbody>
        {props.map((p, i) => {
          const current = i === 12;
          return (
            <tr key={p.name} className="h-[19px]">
              <td className={`border-b border-r border-[#bcbcbc] p-0 text-center ${current ? 'bg-[#ffd48a] text-[#5a0050]' : 'bg-gradient-to-b from-[#fbfbfb] to-[#ececec]'}`}>
                {i + 1}
              </td>
              <td className={`whitespace-nowrap border-b border-r border-[#bcbcbc] p-0 ${current ? 'bg-[#0078d7] text-white' : p.tone ? tones[p.tone] : ''}`}>
                <div className="flex h-[18px] items-center">
                  <span className="flex w-5 justify-center">
                    {i === 18 && (
                      <button aria-label="展开" className="flex h-[13px] w-[13px] items-center justify-center border border-[#bbb]">
                        <Svg w={7} h={7}><path d="M0 3.500h7M3.500 0v7" stroke="#000" /></Svg>
                      </button>
                    )}
                  </span>
                  <span>{p.name}</span>
                </div>
              </td>
              <td className={`border-b border-r border-[#bcbcbc] p-0 ${current ? 'bg-[#d9e9f7]' : ''}`}>
                <div className="flex h-[18px] items-center gap-[2px] pl-[2px]">
                  {current && <RebarSign />}
                  <span>{p.value}</span>
                </div>
              </td>
              <td className="border-b border-r border-[#bcbcbc] p-0">
                {p.extra && (
                  <input
                    type="checkbox"
                    aria-label={`附加 ${p.name}`}
                    className="mx-auto block h-[13px] w-[13px] appearance-none border border-[#222] bg-white checked:bg-[#0078d7]"
                  />
                )}
              </td>
            </tr>
          );
        })}
      </tbody>
    </table>
  );
}

function PropertyEditor() {
  return (
    <section className={`${songFont} flex min-w-0 flex-1 flex-col text-xs`}>
      <div role="tablist" className="flex h-[21px] bg-white">
        <button role="tab" aria-selected="true" className="w-[64px] border-l border-r border-t border-[#d0d0d0] bg-white">
          属性编辑
        </button>
        <span className="flex-1 border-b border-[#d9d9d9]" />
      </div>
      <div className="flex flex-1 flex-col border-x border-b border-[#d9d9d9] bg-white p-[3px]">
        <div className="relative flex-1 border border-[#a0a0a0]">
          <PropertyTable />
          {/* hand-drawn marker round the edge rebar row */}
          <svg className="pointer-events-none absolute -left-[51px] top-[218px]" width="410" height="90" viewBox="0 0 410 90" fill="none" aria-hidden="true">
            <ellipse cx="204" cy="44" rx="199" ry="39" stroke="#f00" strokeWidth="8" />
          </svg>
        </div>
      </div>
    </section>
  );
}

/* ---------- bottom bars ---------- */

const statusCell = 'flex items-center whitespace-nowrap border border-[#d2d2d2] bg-[#f6f6f6] pl-px';

function StatusBar() {
  return (
    <footer className={`${songFont} mt-[3px] flex h-5 gap-[2px] text-xs`}>
      <span className={`${statusCell} w-[148px]`} />
      <span className={`${statusCell} w-[78px]`}>层高:2.15m</span>
      <span className={`${statusCell} w-[98px]`}>底标高:-2.2m</span>
      <span className={`${statusCell} w-12`}>0</span>
      <span className={`${statusCell} flex-1`}>格式：级别+直径+@间距或数量+级别+直径，如：C14@200或6C12</span>
      <span className={`${statusCell} w-[70px]`}>345.6 FPS</span>
    </footer>
  );
}

const PetalIcon = () => (
  <Svg w={24} h={24}>
    <path d="M11.500 11.500H6C3 11.500 1.500 9.500 1.500 6.500S3.500 2 6 2c2 0 3 .5 4 1.500 1 1.200 1.500 3 1.500 5z" fill="#e9e9e9" />
    <path d="M12.500 11.500V6c0-3 2-4.500 5-4.500S22 3.500 22 6c0 2-.5 3-1.500 4-1.200 1-3 1.500-5 1.500z" fill="#e9e9e9" />
    <path d="M12.500 12.500H18c3 0 4.500 2 4.500 5S20.500 22 18 22c-2 0-3-.5-4-1.500-1-1.200-1.500-3-1.500-5z" fill="#e9e9e9" />
    <path d="M11.500 12.500V18c0 3-2 4.500-5 4.500S2 20.500 2 18c0-2 .5-3 1.500-4 1.200-1 3-1.500 5-1.500z" fill="#e9e9e9" />
  </Svg>
);

const BrowserE = ({ color, swoosh }: { color: string; swoosh: string }) => (
  <Svg w={24} h={24}>
    <path d="M19.500 16.500a8 8 0 11.500-4H6" stroke={color} strokeWidth="3.800" />
    <path d="M4 22.500C-1 19 12 2 21 1.500c2 0 2 2 .5 4.500" stroke={swoosh} strokeWidth="1.800" />
  </Svg>
);

const SwirlBellIcon = () => (
  <Svg w={28} h={28}>
    <path d="M19 8A9 9 0 1019 20v-5h-6c-3 0-3-5 2-5M16 8c-8-3-13 8-6 12 3 1 6 0 6-3" stroke="#ddd" strokeWidth="1.300" />
    <path d="M16 11c2-1 1-4 2-6 1-3 6-3 7 0 1 2 0 5 2 6v1H16zM20 13h3v2h-3z" fill="#e9a70c" />
  </Svg>
);

const FilesIcon = () => (
  <Svg w={24} h={24}>
    <path d="M1 3h8l2 2h11v16H1z" fill="#fbdb7c" />
    <path d="M1 3h8v2H1z" fill="#eeb63a" />
    <path d="M5 12h14v9h-4v-5H9v5H5z" fill="#38a4dc" />
  </Svg>
);

const BlueSwirlIcon = () => (
  <Svg w={26} h={26}>
    <path d="M20 5.500C13 4 5 6 4.500 13c0 6.500 6.500 9 11 7.500 3-1 4.500-3.500 3.500-6.500" stroke="#1593ea" strokeWidth="5" />
    <path d="M9 3c5-4 10 1 16-2-1 5-5 7-9 6zM13 13c2 2 5 1 8-1l1 5c-4 2-8 0-9-4z" fill="#1593ea" />
  </Svg>
);

const GreenEIcon = () => (
  <Svg w={24} h={24}>
    <circle cx="12" cy="12.500" r="10.500" fill="#5cc034" />
    <path d="M17.500 15.500a6 6 0 11.200-3.500H7.500" stroke="#fff" strokeWidth="2.800" />
    <path d="M1 22C0 14 13 1 22 2" stroke="#7ed957" strokeWidth="1.800" />
  </Svg>
);

const NoteIcon = () => (
  <Svg w={24} h={24}>
    <rect width="24" height="24" rx="2" fill="#f39a1d" />
    <path d="M3 5h7v3h8v13H7l-1-3H3z" fill="#fdf3d6" />
    <path d="M5 9h5M5 12h6M8 15h7M8 18h7" stroke="#a3611a" />
    <path d="M22 2L12 14l-1 4 3-2z" fill="#6b3d10" stroke="#ffcf70" />
  </Svg>
);

const TaskViewIcon = () => (
  <Svg w={22} h={16}>
    <path d="M5.500 1.500h11v13h-11zM3 3.500H1.500v9H3M19 3.500h1.500v9H19" stroke="#fff" strokeWidth="1.200" />
  </Svg>
);

const taskApps = [
  { name: '任务视图', w: 'w-12', icon: <TaskViewIcon /> },
  { name: '助手', w: 'w-[52px]', icon: <PetalIcon /> },
  { name: '浏览器', w: 'w-[52px]', icon: <BrowserE color="#e9e9e9" swoosh="#e9e9e9" /> },
  { name: '提醒', w: 'w-[52px]', icon: <SwirlBellIcon /> },
  { name: 'Edge', w: 'w-[50px]', icon: <FaEdgeLegacy size={22} color="#0a7bdc" /> },
  { name: 'IE', w: 'w-12', icon: <BrowserE color="#4aaef0" swoosh="#f5c518" /> },
  { name: '文件资源管理器', w: 'w-12', icon: <FilesIcon /> },
  { name: '加速浏览器', w: 'w-12', icon: <BlueSwirlIcon />, run: true },
  { name: '安全浏览器', w: 'w-12', icon: <GreenEIcon />, run: true },
  { name: '钢筋算量', w: 'w-12', icon: <AppIcon size={24} />, run: true, active: true },
  { name: '便笺', w: 'w-12', icon: <NoteIcon />, run: true },
];

function Taskbar() {
  return (
    <footer className={`${uiFont} flex h-10 items-center overflow-hidden bg-[#010c0f] text-xs text-white`}>
      <button aria-label="开始" className="flex h-full w-12 shrink-0 items-center justify-center bg-black">
        <Svg w={16}><path d="M0 2.300L6.500 1.400v6.100H0zM7.300 1.300L16 0v7.500H7.300zM0 8.300h6.500v6.100L0 13.500zM7.300 8.300H16V16l-8.700-1.300z" fill="#fff" /></Svg>
      </button>
      <div className="flex h-full w-[344px] shrink-0 items-center bg-[#333] pl-[9px] pr-[14px]">
        <Svg w={22} h={22}><circle cx="11" cy="11" r="9" stroke="#fff" strokeWidth="2.800" /></Svg>
        <input aria-label="搜索" placeholder="在这里输入你要搜索的内容" className="ml-[5px] min-w-0 flex-1 text-sm outline-none placeholder:text-[#a0a0a0]" />
        <Svg w={13} h={17}><path d="M4.500 1.500h4v9h-4zM1.500 8v5h10V8M6.500 13v3.500M4 16.500h5" stroke="#a8a8a8" strokeWidth="1.200" /></Svg>
      </div>
      {taskApps.map((a) => (
        <button key={a.name} aria-label={a.name} className={`${a.w} flex h-full shrink-0 flex-col items-center ${a.active ? 'bg-[#323d40]' : ''}`}>
          <span className="flex flex-1 items-center">{a.icon}</span>
          <span className={`h-[2px] ${a.active ? 'w-full' : 'w-[39px]'} ${a.run ? 'bg-[#76b9ed]' : ''}`} />
        </button>
      ))}
      <span className="ml-[13px] shrink-0 text-[#ddd]">链接</span>
      <div className="ml-5 w-[50px] shrink-0 whitespace-nowrap text-center leading-[17px]">
        47%<br />CPU使用
      </div>
      <div className="ml-auto flex h-full shrink-0 items-center">
        <button aria-label="显示隐藏的图标" className="mr-[10px]">
          <Svg w={13} h={8}><path d="M1 7l5.500-5.500L12 7" stroke="#fff" strokeWidth="1.200" /></Svg>
        </button>
        <Svg w={16} h={12}><path d="M4.500 3.500h10v7h-9v-3M1.500 0v3M4.500 0v3M0 3.500h6M3 3v4.500h3" stroke="#fff" /><path d="M6 5h7v4H6z" fill="#fff" /></Svg>
        <span className="w-[10px]" />
        <Svg w={14} h={14}>
          <path d="M1 12A11 11 0 0112.500 1.500M4 12.500A8 8 0 0112.500 5M7 13a5 5 0 015.500-4.500" stroke="#ddd" strokeWidth="1.200" />
          <circle cx="11.500" cy="12" r="1.500" fill="#fff" />
        </Svg>
        <span className="w-[7px]" />
        <Svg w={17} h={14}>
          <path d="M.5 4.500h2.500l3-3v11l-3-3H.5zM8 5q1.500 2 0 4" stroke="#fff" />
          <path d="M10.500 3q3 4 0 8M13 1.500q4 5.500 0 11" stroke="#999" />
        </Svg>
        <span className="w-[9px]" />
        <Svg w={24} h={14}>
          <path d="M.5.500h22v12H.5z" stroke="#fff" />
          <path d="M3 3.500h18M3 6.500h18" stroke="#fff" strokeWidth="1.500" strokeDasharray="1.500 1.500" />
          <path d="M6 9.500h11" stroke="#fff" />
        </Svg>
        <span className="ml-[10px] mr-[14px] w-3">中</span>
        <SogouIcon size={16} />
        <div className="ml-4 w-[62px] whitespace-nowrap text-center leading-[19px]">
          9:05<br />2018/6/26
        </div>
        <button aria-label="通知" className="ml-[18px] mr-5">
          <Svg w={17} h={16}><path d="M.5.500h15.500v11.500h-5l-2.500 3-2.500-3H.5z" stroke="#fff" strokeWidth="1.200" /></Svg>
        </button>
        <span className="mr-1 h-full w-px bg-[#555]" />
      </div>
    </footer>
  );
}

export default function App() {
  const [type, setType] = useState('0筏板基础(M)');
  const [slab, setSlab] = useState('FB-1');

  return (
    <div className={`${uiFont} relative flex h-screen flex-col overflow-hidden bg-[#f0f0f0] text-black`}>
      <TitleBar />
      <MenuBar />
      <MainToolbar />
      <main className="mt-[2px] flex min-h-0 flex-1">
        <ModuleNav active={type} onPick={setType} />
        <div className="ml-[5px] flex min-w-0 flex-1 flex-col">
          <ComponentToolbar />
          <div className="flex min-h-0 flex-1 gap-[3px]">
            <ComponentList selected={slab} onSelect={setSlab} />
            <PropertyEditor />
          </div>
        </div>
      </main>
      <StatusBar />
      <Taskbar />
      {/* floating speed ball */}
      <div className="absolute -top-[30px] left-[1007px] flex h-[49px] w-[49px] items-end justify-center rounded-full border-2 border-[#c8d2ca] bg-[#3dbf5f] pb-[3px] text-xs font-bold leading-3 text-white shadow-md ring-1 ring-inset ring-[#1f8f3f]">
        <span>71</span>
      </div>
    </div>
  );
}
